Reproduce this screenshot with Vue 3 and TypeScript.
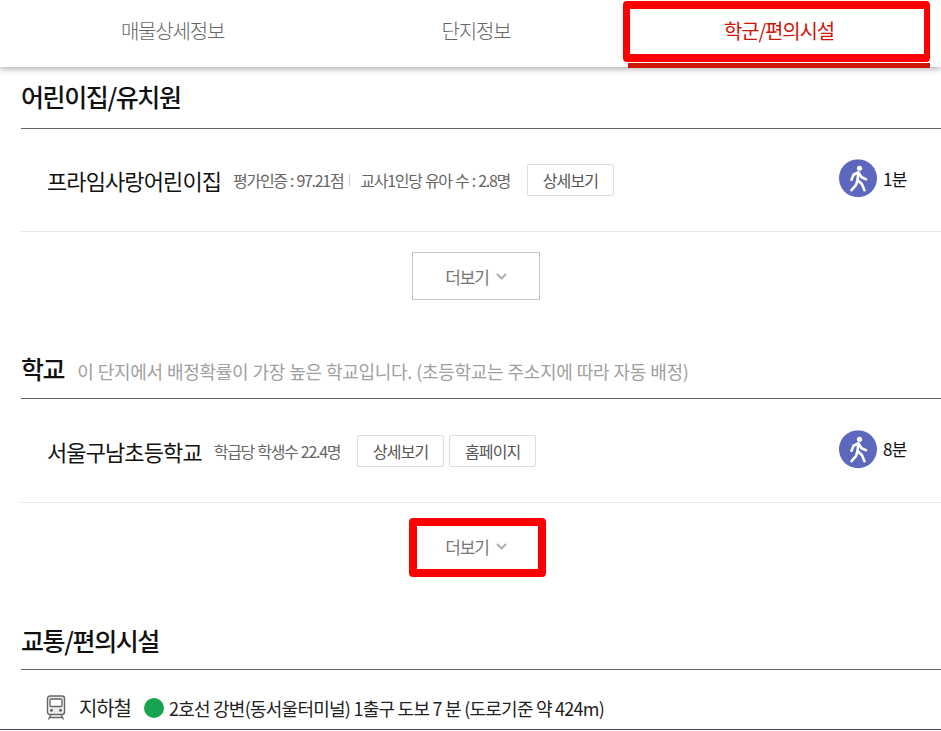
<script setup lang="ts">
const tabs = ['매물상세정보', '단지정보', '학군/편의시설']
</script>

<template>
  <div class="page">
    <nav class="tabs">
      <a v-for="(t, i) in tabs" :key="t" class="tab" :class="{ active: i === 2 }">
        {{ t }}
        <span v-if="i === 2" class="mark tab-mark"></span>
      </a>
    </nav>

    <main class="content">
      <h2 class="title first">어린이집/유치원</h2>
      <div class="row r1">
        <strong class="name">프라임사랑어린이집</strong>
        <span class="meta">평가인증 : 97.21점</span>
        <i class="sep"></i>
        <span class="meta">교사1인당 유아 수 : 2.8명</span>
        <button class="btn b1">상세보기</button>
        <span class="walk">
          <svg width="38" height="38" viewBox="0 0 38 38"><circle cx="19" cy="19" r="19" fill="#5b68bd"/><circle cx="20.5" cy="9" r="2.6" fill="#fff"/><path d="M19.5 13 14.5 15.5 12.5 20.5M19.5 13 18.5 20.5 23 25 25.5 31M18.5 20.5 17 26 12.5 31M20 14 22.5 18 27 20" fill="none" stroke="#fff" stroke-width="2.6" stroke-linecap="round" stroke-linejoin="round"/></svg>
          <span>1분</span>
        </span>
      </div>
      <div class="more-wrap m1"><button class="more">더보기 <svg width="11" height="7" viewBox="0 0 11 7"><path d="M1 1l4.5 4.5L10 1" fill="none" stroke="#a9a9a9" stroke-width="1.8"/></svg></button></div>

      <div class="title-line second">
        <h2 class="title inline">학교</h2>
        <span class="note">이 단지에서 배정확률이 가장 높은 학교입니다. (초등학교는 주소지에 따라 자동 배정)</span>
      </div>
      <div class="row r2">
        <strong class="name">서울구남초등학교</strong>
        <span class="meta">학급당 학생수 22.4명</span>
        <button class="btn b1">상세보기</button>
        <button class="btn b2">홈페이지</button>
        <span class="walk">
          <svg width="38" height="38" viewBox="0 0 38 38"><circle cx="19" cy="19" r="19" fill="#5b68bd"/><circle cx="20.5" cy="9" r="2.6" fill="#fff"/><path d="M19.5 13 14.5 15.5 12.5 20.5M19.5 13 18.5 20.5 23 25 25.5 31M18.5 20.5 17 26 12.5 31M20 14 22.5 18 27 20" fill="none" stroke="#fff" stroke-width="2.6" stroke-linecap="round" stroke-linejoin="round"/></svg>
          <span>8분</span>
        </span>
      </div>
      <div class="more-wrap m2">
        <button class="more">더보기 <svg width="11" height="7" viewBox="0 0 11 7"><path d="M1 1l4.5 4.5L10 1" fill="none" stroke="#a9a9a9" stroke-width="1.8"/></svg>
          <span class="mark more-mark"></span>
        </button>
      </div>

      <h2 class="title third">교통/편의시설</h2>
      <div class="subway">
        <svg class="train" width="20" height="25" viewBox="0 0 20 25"><rect x="1.5" y="1" width="17" height="18.5" rx="2.5" fill="#eee" stroke="#666" stroke-width="1.4"/><rect x="4" y="4" width="12" height="7.5" rx="1" fill="#fff" stroke="#666" stroke-width="1.3"/><circle cx="5.5" cy="15.3" r="1.5" fill="#666"/><circle cx="14.5" cy="15.3" r="1.5" fill="#666"/><path d="M5 19.5 2.5 24.5M15 19.5l2.5 5M3.5 22.5h13" stroke="#666" stroke-width="1.3" fill="none"/></svg>
        <span class="sub-label">지하철</span>
        <i class="dot"></i>
        <span class="sub-text">2호선 강변(동서울터미널) 1출구 도보 7 분 (도로기준 약 424m)</span>
      </div>
    </main>
    <div class="bottom"></div>
  </div>
</template>

<style>
html, body { margin: 0; background: #fff; }
</style>

<style scoped>
.page {
  width: 941px; height: 731px; overflow: hidden; position: relative; background: #fff;
  display: flex; flex-direction: column;
  font-family: "Noto Sans CJK KR", "Noto Sans", sans-serif; color: #111;
}
.tabs {
  height: 67px; flex: none; box-sizing: border-box; padding: 0 11px 0 21px; display: grid;
  grid-template-columns: 303px 304px 302px;
  box-shadow: 0 2px 6px rgba(0,0,0,.32); position: relative; z-index: 1; background: #fff;
}
.tab { display: flex; align-items: center; justify-content: center; font-size: 20px; letter-spacing: -1.2px; color: #666; height: 60px; position: relative; font-weight: 300; }
.tab.active { color: #cf1408; font-weight: 400; height: 68px; box-sizing: border-box; border-bottom: 5px solid #cf1408; padding-bottom: 3px; }
.mark { position: absolute; border: 8px solid #ff0000; border-radius: 4px; box-sizing: border-box; pointer-events: none; }
.tab-mark { left: -5px; top: 1px; width: 307px; height: 61px; border-left-width: 7px; border-right-width: 6px; }
.content { padding: 0 0 0 21px; flex: 1; }
.title { margin: 0; font-size: 25px; font-weight: 500; letter-spacing: -1.4px; color: #111; line-height: 34px; }
.first { height: 49px; padding-top: 12px; border-bottom: 1px solid #666; }
.row { display: flex; align-items: center; padding-left: 26px; box-sizing: border-box; border-bottom: 1px solid #e6e6e6; position: relative; }
.r1 { height: 103px; }
.r2 { height: 104px; }
.name { font-size: 22px; font-weight: 400; letter-spacing: -.9px; color: #111; margin-right: 12px; }
.meta { font-size: 16px; letter-spacing: -1.3px; word-spacing: 1px; color: #666; font-weight: 400; }
.sep { width: 1px; height: 12px; background: #ccc; margin: 0 10px 0 6px; }
.btn { height: 32px; padding: 0; border: 1px solid #ddd; border-radius: 2px; background: #fff; font: inherit; font-size: 16px; letter-spacing: -.9px; color: #555; width: 87px; margin-left: 17px; }
.b2 { margin-left: 5px; }
.walk { position: absolute; left: 818px; top: 50%; transform: translateY(-52%); margin-top: -1px; display: flex; align-items: center; gap: 6px; font-size: 17px; letter-spacing: -.6px; color: #111; }
.walk svg { display: block; }
.more-wrap { display: flex; justify-content: center; width: 910px; box-sizing: border-box; }
.m1 { padding-top: 20px; height: 68px; }
.m2 { padding-top: 19px; height: 68px; }
.more { position: relative; width: 128px; height: 48px; border: 1px solid #c8c8c8; background: #fff; font: inherit; font-size: 17px; letter-spacing: -1.1px; color: #777; display: flex; align-items: center; justify-content: center; gap: 7px; padding: 0; }
.more-mark { left: -4px; top: -5px; width: 137px; height: 59px; }
.title-line { display: flex; align-items: baseline; }
.second { margin-top: 51px; height: 47px; border-bottom: 1px solid #666; }
.inline { flex: none; }
.note { font-size: 18px; letter-spacing: -.3px; word-spacing: .5px; color: #a0a0a0; margin-left: 13px; }
.third { margin-top: 29px; padding-top: 23px; height: 46px; border-bottom: 1px solid #666; }
.subway { display: flex; align-items: center; height: 59px; box-sizing: border-box; padding: 16px 0 0 25px; }
.sub-label { font-size: 20px; letter-spacing: -1.1px; color: #222; margin-left: 13px; }
.dot { width: 20px; height: 20px; border-radius: 50%; background: #17a34f; margin-left: 13px; }
.sub-text { font-size: 18px; letter-spacing: -.75px; color: #222; margin-left: 5px; }
.bottom { position: absolute; left: 0; right: 0; top: 729px; height: 1px; background: #44485f; }
</style>
